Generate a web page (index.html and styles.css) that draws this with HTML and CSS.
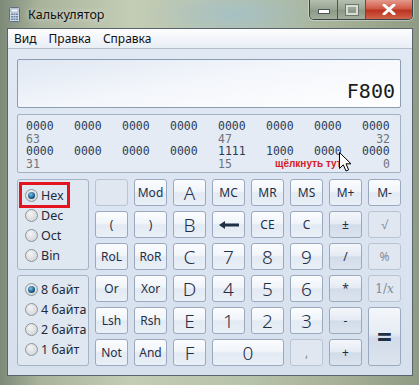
FILE: index.html
```html
<!DOCTYPE html>
<html lang="ru">
<head>
    <meta charset="UTF-8">
    <title>Калькулятор</title>
    <link rel="stylesheet" href="styles.css">
</head>
<body>
    <div class="window">
        <div class="titlebar">
            <svg class="app-icon" width="11" height="15" viewBox="0 0 11 15">
                <rect x="0.5" y="0.5" width="10" height="14" rx="1" fill="#cfdbe8" stroke="#5d7189"/>
                <rect x="2" y="2" width="7" height="3" fill="#f4f8fc" stroke="#7f93aa" stroke-width="0.6"/>
                <g fill="#6e87a3">
                    <rect x="2" y="6.5" width="2" height="1.5"/><rect x="4.5" y="6.5" width="2" height="1.5"/><rect x="7" y="6.5" width="2" height="1.5"/>
                    <rect x="2" y="9" width="2" height="1.5"/><rect x="4.5" y="9" width="2" height="1.5"/><rect x="7" y="9" width="2" height="1.5"/>
                    <rect x="2" y="11.5" width="2" height="1.5"/><rect x="4.5" y="11.5" width="2" height="1.5"/><rect x="7" y="11.5" width="2" height="1.5"/>
                </g>
            </svg>
            <span class="title">Калькулятор</span>
            <div class="caption-buttons">
                <div class="cap-btn cap-min"><span class="min-bar"></span></div>
                <div class="cap-btn cap-max"><span class="max-box"></span></div>
                <div class="cap-btn cap-close">
                    <svg width="14" height="11" viewBox="0 0 14 11">
                        <path d="M2 1 L12 10 M12 1 L2 10" stroke="#fff" stroke-width="3" stroke-linecap="round"/>
                    </svg>
                </div>
            </div>
        </div>

        <div class="client">
            <div class="menubar">
                <span class="menu-item">Вид</span>
                <span class="menu-item">Правка</span>
                <span class="menu-item">Справка</span>
            </div>

            <div class="content">
                <div class="display">F800</div>

                <div class="bits">
                    <span class="nib">0000</span><span class="nib">0000</span><span class="nib">0000</span><span class="nib">0000</span>
                    <span class="nib">0000</span><span class="nib">0000</span><span class="nib">0000</span><span class="nib">0000</span>
                    <span class="pos">63</span><span class="pos col5">47</span><span class="pos col8">32</span>
                    <span class="nib">0000</span><span class="nib">0000</span><span class="nib">0000</span><span class="nib">0000</span>
                    <span class="nib">1111</span><span class="nib">1000</span><span class="nib">0000</span><span class="nib">0000</span>
                    <span class="pos">31</span><span class="pos col5">15</span><span class="hint">щёлкнуть тут</span><span class="pos col8">0</span>
                    <svg class="cursor" width="13" height="21" viewBox="0 0 13 21">
                        <path d="M0.5 0.5 L0.5 16.5 L4.3 12.8 L7 19 L9.6 17.9 L7 11.8 L12 11.8 Z" fill="#fff" stroke="#000" stroke-width="1" stroke-linejoin="round"/>
                    </svg>
                </div>

                <div class="keypad">
                    <div class="group base-group">
                        <label class="radio marked"><span class="dot on"></span>Hex</label>
                        <label class="radio"><span class="dot"></span>Dec</label>
                        <label class="radio"><span class="dot"></span>Oct</label>
                        <label class="radio"><span class="dot"></span>Bin</label>
                    </div>
                    <div class="group size-group">
                        <label class="radio"><span class="dot on"></span>8 байт</label>
                        <label class="radio"><span class="dot"></span>4 байта</label>
                        <label class="radio"><span class="dot"></span>2 байта</label>
                        <label class="radio"><span class="dot"></span>1 байт</label>
                    </div>

                    <div class="btn off"></div>
                    <div class="btn">Mod</div>
                    <div class="btn num">A</div>
                    <div class="btn">MC</div>
                    <div class="btn">MR</div>
                    <div class="btn">MS</div>
                    <div class="btn">M+</div>
                    <div class="btn">M-</div>

                    <div class="btn">(</div>
                    <div class="btn">)</div>
                    <div class="btn num">B</div>
                    <div class="btn">
                        <svg width="20" height="8" viewBox="0 0 20 8"><path d="M0 4 L6 0 L6 2.6 L20 2.6 L20 5.4 L6 5.4 L6 8 Z" fill="#1f2f45"/></svg>
                    </div>
                    <div class="btn">CE</div>
                    <div class="btn">C</div>
                    <div class="btn op">±</div>
                    <div class="btn off">√</div>

                    <div class="btn">RoL</div>
                    <div class="btn">RoR</div>
                    <div class="btn num">C</div>
                    <div class="btn num">7</div>
                    <div class="btn num">8</div>
                    <div class="btn num">9</div>
                    <div class="btn op">/</div>
                    <div class="btn off">%</div>

                    <div class="btn">Or</div>
                    <div class="btn">Xor</div>
                    <div class="btn num">D</div>
                    <div class="btn num">4</div>
                    <div class="btn num">5</div>
                    <div class="btn num">6</div>
                    <div class="btn op">*</div>
                    <div class="btn off recip">1/<i>x</i></div>

                    <div class="btn">Lsh</div>
                    <div class="btn">Rsh</div>
                    <div class="btn num">E</div>
                    <div class="btn num">1</div>
                    <div class="btn num">2</div>
                    <div class="btn num">3</div>
                    <div class="btn op">-</div>
                    <div class="btn op equals">=</div>

                    <div class="btn">Not</div>
                    <div class="btn">And</div>
                    <div class="btn num">F</div>
                    <div class="btn num zero">0</div>
                    <div class="btn off">,</div>
                    <div class="btn op">+</div>
                </div>
            </div>
        </div>
    </div>
</body>
</html>
```

FILE: styles.css
```css
html, body {
    margin: 0;
    padding: 0;
}

body {
    width: 419px;
    height: 385px;
    overflow: hidden;
    font-family: "Noto Sans", "Open Sans", sans-serif;
    color: #1f2f45;
}

.window {
    width: 419px;
    height: 385px;
    background:
        radial-gradient(ellipse 90px 30px at 235px 14px, rgba(150, 190, 215, 0.55), transparent),
        linear-gradient(90deg, #7d8a78 0px, #a9b39c 40px, #c3ccb4 130px, #b7c2aa 250px, #a5b096 340px, #8f9b84 419px);
    display: flex;
    flex-direction: column;
}

/* title bar */
.titlebar {
    height: 28px;
    display: flex;
    align-items: flex-start;
    position: relative;
}

.app-icon {
    margin: 7px 0 0 9px;
}

.title {
    margin: 6px 0 0 8px;
    font-size: 12.5px;
    color: #111;
    text-shadow: 0 0 6px rgba(255, 255, 255, 0.8);
}

.caption-buttons {
    margin-left: auto;
    margin-right: 6px;
    display: flex;
    height: 19px;
    border: 1px solid #39424b;
    border-top: none;
    border-radius: 0 0 5px 5px;
    overflow: hidden;
    box-shadow: 0 0 0 1px rgba(255, 255, 255, 0.35);
}

.cap-btn {
    display: flex;
    align-items: center;
    justify-content: center;
}

.cap-min,
.cap-max {
    width: 27px;
    background: linear-gradient(#b6bfb0, #97a391 50%, #8a9785 51%, #a3ae9b);
    border-right: 1px solid #4c5650;
}

.min-bar {
    width: 10px;
    height: 3px;
    margin-top: 4px;
    background: #fff;
    border: 1px solid #4a5358;
}

.max-box {
    width: 8px;
    height: 6px;
    border: 2px solid #d7ddd3;
    box-shadow: 0 0 0 1px #6d7770;
}

.cap-close {
    width: 46px;
    background: linear-gradient(#e59a8c, #d05a45 45%, #bb3420 55%, #d0644a);
}

/* client area */
.client {
    flex: 1;
    margin: 0 6px 9px 7px;
    border: 1px solid #59636d;
    background: linear-gradient(#e1e9f4, #d6e0ed);
    display: flex;
    flex-direction: column;
}

.menubar {
    height: 19px;
    display: flex;
    align-items: center;
    padding-left: 0;
    background: linear-gradient(#fdfdfe, #e8eef6);
    border-bottom: 1px solid #b4bfcd;
    font-size: 12px;
    color: #111;
}

.menu-item {
    padding: 0 6px;
}

.content {
    padding: 10px 11px 0 9px;
}

/* display */
.display {
    height: 47px;
    border: 1px solid #8d9db1;
    border-radius: 2px;
    background: linear-gradient(170deg, #dfe7f2 0%, #f3f6fb 45%, #ffffff 100%);
    font-family: "DejaVu Sans Mono", monospace;
    font-size: 20px;
    color: #1c1c1c;
    text-align: right;
    padding-right: 5px;
    line-height: 20px;
    box-sizing: border-box;
    height: 49px;
    padding-top: 21px;
}

/* binary panel */
.bits {
    position: relative;
    margin-top: 6px;
    height: 59px;
    box-sizing: border-box;
    border: 1px solid #a3b1c4;
    border-radius: 2px;
    background: #e4ebf4;
    padding: 5px 0 0 8px;
    display: grid;
    grid-template-columns: repeat(8, 28px);
    column-gap: 20px;
    grid-auto-rows: 12.5px;
    font-family: "DejaVu Sans Mono", monospace;
    font-size: 11.5px;
    line-height: 12.5px;
}

.nib {
    color: #2b3d57;
}

.pos {
    color: #6e747c;
}

.col5 {
    grid-column: 5;
}

.col8 {
    grid-column: 8;
    text-align: right;
}

.hint {
    grid-column: 6 / span 2;
    padding-left: 9px;
    font-family: "Liberation Sans", Arial, sans-serif;
    font-size: 10px;
    font-weight: bold;
    color: #d3202a;
    white-space: nowrap;
}

.cursor {
    position: absolute;
    left: 321px;
    top: 37px;
}

/* keypad */
.keypad {
    margin-top: 6px;
    display: grid;
    grid-template-columns: 72px repeat(8, 33px);
    grid-template-rows: repeat(6, 27px);
    column-gap: 6px;
    row-gap: 5px;
}

.group {
    grid-column: 1;
    border: 1px solid #a5b3c6;
    border-radius: 3px;
    background: #dfe7f1;
    padding: 5px 0 0 4px;
    display: flex;
    flex-direction: column;
}

.base-group {
    grid-row: 1 / 4;
}

.size-group {
    grid-row: 4 / 7;
    padding-top: 3px;
}

.radio {
    height: 20px;
    display: flex;
    align-items: center;
    font-size: 12.5px;
    color: #1e2a3a;
    padding-left: 3px;
    width: 42px;
}

.radio.marked {
    outline: 3px solid #e3141f;
    outline-offset: 0;
    margin-left: 0;
}

.size-group .radio {
    width: auto;
}

.dot {
    width: 11px;
    height: 11px;
    border-radius: 50%;
    border: 1px solid #8e959c;
    background: radial-gradient(circle at 40% 35%, #f4f4f4, #c9ccd0);
    margin-right: 3px;
    flex-shrink: 0;
    display: flex;
    align-items: center;
    justify-content: center;
}

.dot.on::after {
    content: "";
    width: 7px;
    height: 7px;
    border-radius: 50%;
    background: radial-gradient(circle at 40% 35%, #7fc2e6, #165a86 60%, #0d3c5e);
}

.btn {
    border: 1px solid #9aa9bd;
    border-radius: 3px;
    background: linear-gradient(#fbfcfe 0%, #f1f5fa 45%, #e3eaf3 52%, #eaf0f7 100%);
    display: flex;
    align-items: center;
    justify-content: center;
    font-size: 12px;
    color: #1f2f45;
}

.btn.num {
    font-size: 19px;
    font-weight: 300;
}

.btn.op {
    background: linear-gradient(#f4f7fb 0%, #e6ecf4 45%, #d2dce9 52%, #dbe3ee 100%);
}

.btn.off {
    background: #e0e7f0;
    border-color: #b8c4d3;
    color: #7f8b9a;
}

.recip {
    font-family: "DejaVu Serif", serif;
    font-size: 12px;
}

.equals {
    grid-row: span 2;
    font-size: 26px;
    font-weight: bold;
}

.zero {
    grid-column: span 2;
}
```
